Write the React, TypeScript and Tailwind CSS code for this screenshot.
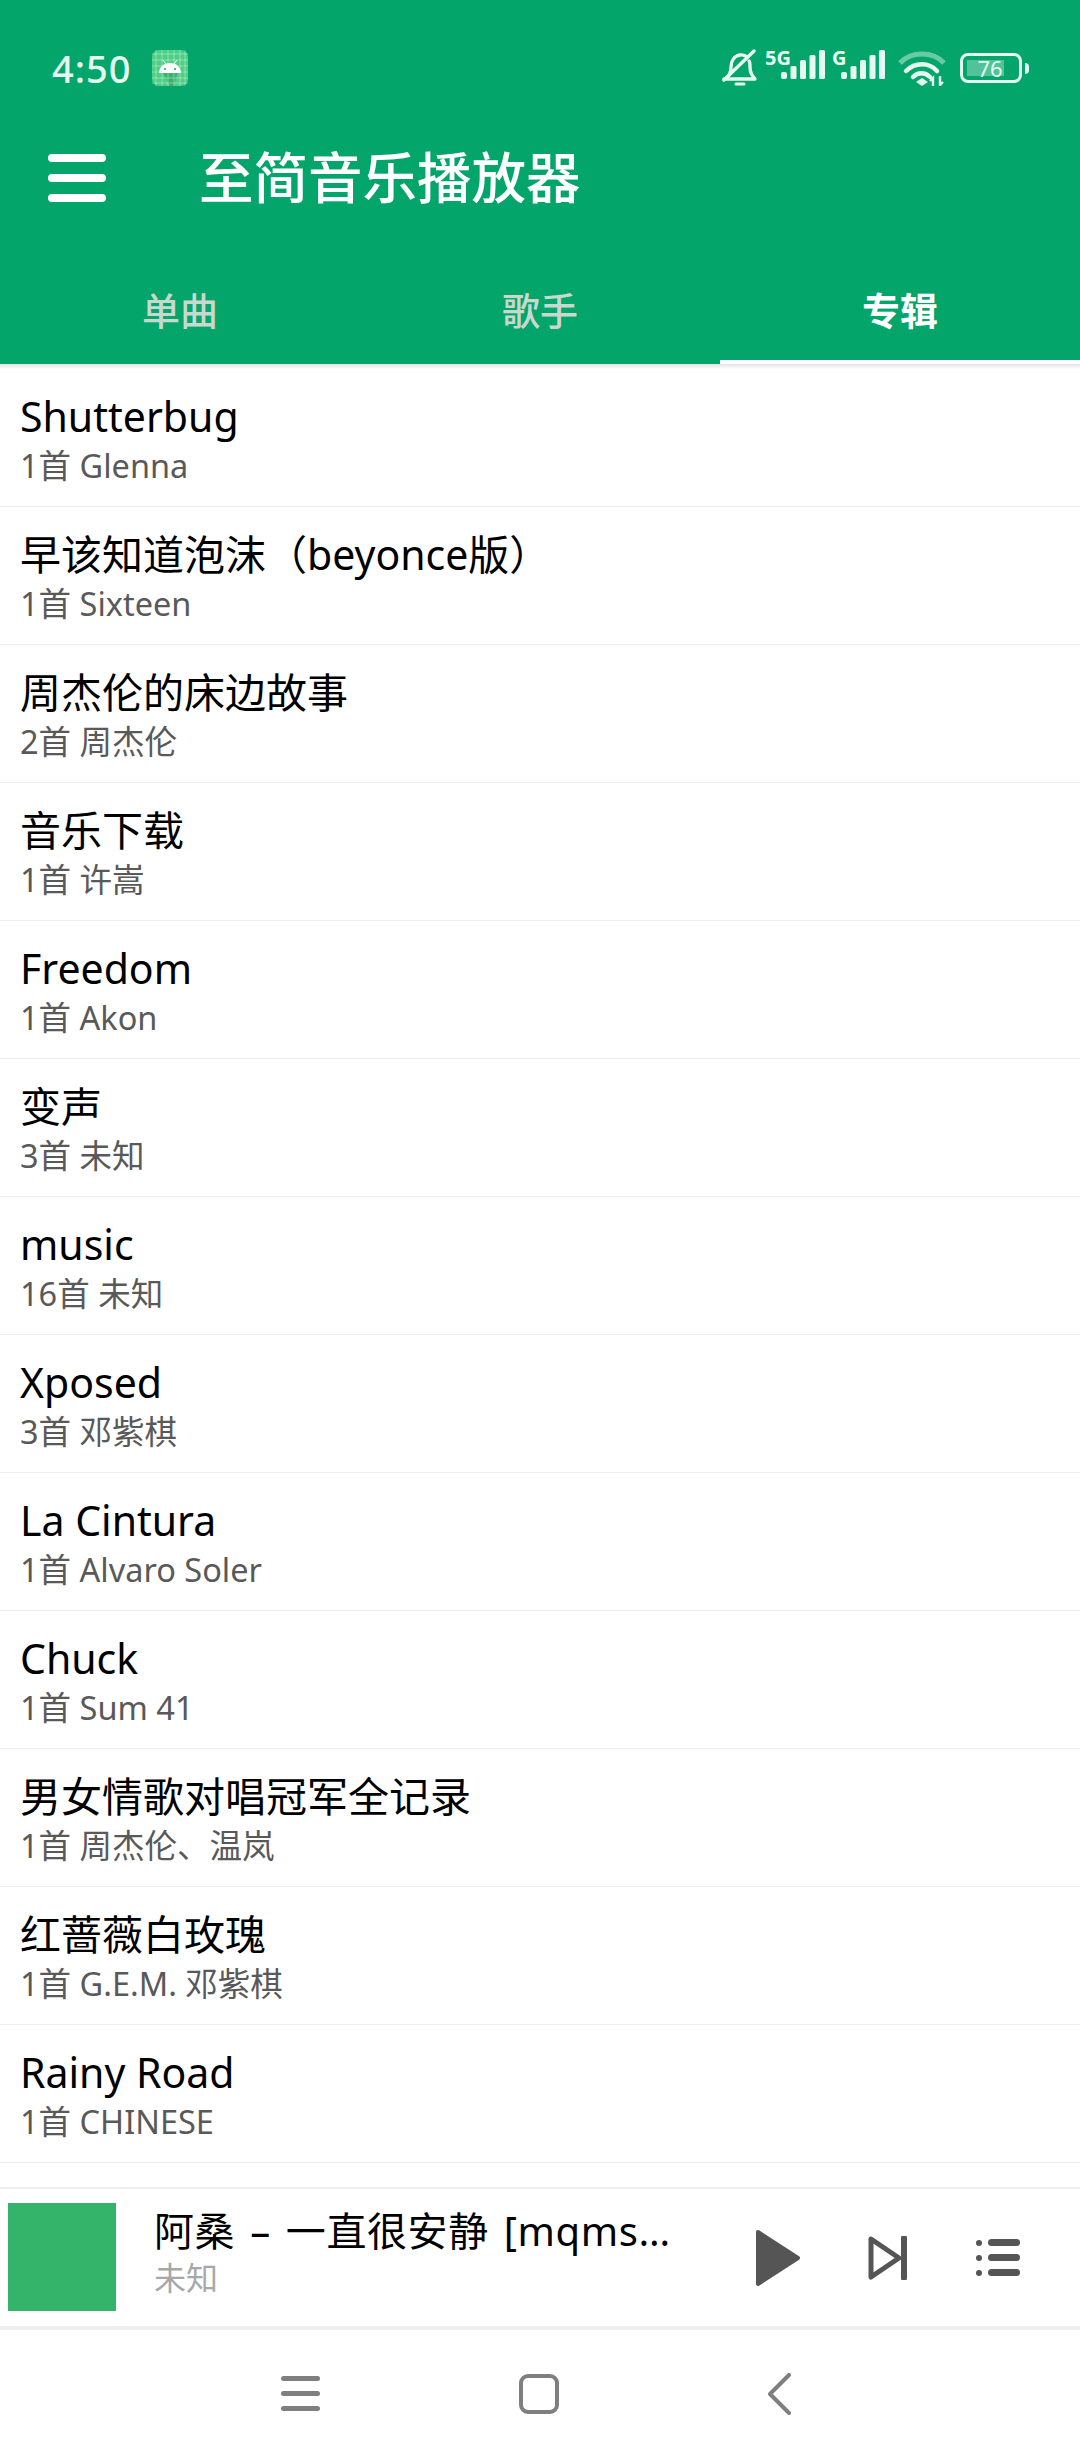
import React from 'react';

const albums = [
  { title: 'Shutterbug', sub: '1首 Glenna' },
  { title: '早该知道泡沫（beyonce版）', sub: '1首 Sixteen' },
  { title: '周杰伦的床边故事', sub: '2首 周杰伦' },
  { title: '音乐下载', sub: '1首 许嵩' },
  { title: 'Freedom', sub: '1首 Akon' },
  { title: '变声', sub: '3首 未知' },
  { title: 'music', sub: '16首 未知' },
  { title: 'Xposed', sub: '3首 邓紫棋' },
  { title: 'La Cintura', sub: '1首 Alvaro Soler' },
  { title: 'Chuck', sub: '1首 Sum 41' },
  { title: '男女情歌对唱冠军全记录', sub: '1首 周杰伦、温岚' },
  { title: '红蔷薇白玫瑰', sub: '1首 G.E.M. 邓紫棋' },
  { title: 'Rainy Road', sub: '1首 CHINESE' },
];

function AppBadge() {
  return (
    <svg width="36" height="36" viewBox="0 0 36 36" className="ml-[20px]">
      <rect width="36" height="36" rx="7" fill="#4fcf85" />
      <path d="M10 21h16l-4 15H18z" fill="#2f9c61" opacity="0.6" />
      <path
        d="M4 0v36M10 0v36M16 0v36M22 0v36M28 0v36M33 0v36M0 4h36M0 10h36M0 16h36M0 22h36M0 28h36M0 33h36"
        stroke="#ffffff"
        strokeOpacity="0.35"
        strokeWidth="1"
      />
      <path d="M7 23c0-6 5-10 11-10s11 4 11 10z" fill="#ffffff" />
      <path d="M11 10l3 4M25 10l-3 4" stroke="#ffffff" strokeWidth="1" />
      <circle cx="13" cy="19" r="1" fill="#2f9c61" />
      <circle cx="23" cy="19" r="1" fill="#2f9c61" />
    </svg>
  );
}

function Bars({ x }: { x: number }) {
  return (
    <g fill="#e6f9f0">
      <rect x={x} y="22" width="6" height="7" rx="2" />
      <rect x={x + 9.5} y="16" width="6" height="13" rx="1.5" />
      <rect x={x + 19} y="10" width="6" height="19" rx="1.5" />
      <rect x={x + 28.5} y="5" width="6" height="24" rx="1.5" />
      <rect x={x + 38} y="0" width="6" height="29" rx="1.5" />
    </g>
  );
}

function StatusIcons() {
  return (
    <div className="flex items-center">
      <svg width="38" height="38" viewBox="0 0 38 38" fill="none" stroke="#e6f9f0" strokeWidth="3.4" strokeLinecap="round" strokeLinejoin="round">
        <path d="M3 30h31c-4-4-5-7-5-12 0-3 0-5-1-6M10 18c0-6 3-11 9-12 3-.5 5 0 7 2M10 18c0 5-2 9-5 12" />
        <path d="M3 31L33 2" />
        <path d="M15 35h8" strokeWidth="3" />
      </svg>
      <svg width="60" height="38" viewBox="0 -8 60 38" className="ml-[6px] -mt-[14px]">
        <text x="0" y="15" fontSize="20" fontWeight="700" fill="#e6f9f0" fontFamily="Noto Sans, sans-serif">5G</text>
        <Bars x={16} />
      </svg>
      <svg width="54" height="38" viewBox="0 -8 54 38" className="ml-[7px] -mt-[14px]">
        <text x="0" y="15" fontSize="20" fontWeight="700" fill="#e6f9f0" fontFamily="Noto Sans, sans-serif">G</text>
        <Bars x={9} />
      </svg>
      <svg width="48" height="36" viewBox="0 0 48 36" fill="none" className="ml-[12px]">
        <path d="M2 13C13 1 35 1 46 13" stroke="#e6f9f0" strokeOpacity="0.45" strokeWidth="5" />
        <path d="M8 21c9-9 23-9 31 0" stroke="#e6f9f0" strokeWidth="4.5" strokeLinecap="round" />
        <path d="M15 27c5-5 12-5 17 0" stroke="#e6f9f0" strokeWidth="4.5" strokeLinecap="round" />
        <path d="M18 32l6-4 6 4-6 4z" fill="#e6f9f0" />
        <path d="M35 36v-8l-3 3M42 26v9l3-3" stroke="#e6f9f0" strokeWidth="2.4" />
      </svg>
      <div className="ml-[14px] flex items-center">
        <div className="relative flex h-[30px] w-[62px] items-center rounded-[8px] border-[3px] border-[#e6f9f0] p-[4px]">
          <div className="h-full w-[37px] bg-[#e6f9f0]/35" />
          <span className="absolute inset-0 flex items-center justify-center pr-[2px] text-[22px] leading-none text-[#e6f9f0]">76</span>
        </div>
        <div className="ml-[3px] h-[11px] w-[4px] rounded-r-full bg-[#e6f9f0]" />
      </div>
    </div>
  );
}

function AlbumRow({ title, sub }: { title: string; sub: string }) {
  return (
    <div className="h-[138px] shrink-0 border-b border-[#eeeeee] pl-[20px] pt-[23px]">
      <div className="text-[41px] leading-[48px] text-black">{title}</div>
      <div className="mt-[6px] text-[32.5px] leading-[40px] text-[#595959]">{sub}</div>
    </div>
  );
}

export default function App() {
  return (
    <div className="flex h-[2460px] w-[1080px] flex-col overflow-hidden bg-white font-['Noto_Sans','Noto_Sans_CJK_SC',sans-serif]">
      <header className="h-[364px] shrink-0 bg-[#03a56a]">
        <div className="flex h-[136px] items-center justify-between pl-[52px] pr-[51px]">
          <div className="flex items-center">
            <span className="text-[38px] font-medium leading-none tracking-[1px] text-[#e6f9f0]">4:50</span>
            <AppBadge />
          </div>
          <StatusIcons />
        </div>
        <div className="flex h-[84px] items-center pl-[48px]">
          <div className="flex w-[58px] flex-col gap-[12px]">
            <div className="h-[8px] rounded-full bg-white" />
            <div className="h-[8px] rounded-full bg-white" />
            <div className="h-[8px] rounded-full bg-white" />
          </div>
          <h1 className="ml-[93px] -mt-[2px] text-[54.5px] font-medium leading-none text-white">至简音乐播放器</h1>
        </div>
        <div className="flex h-[144px] text-[38px] font-medium">
          <div className="flex flex-1 items-center justify-center border-b-4 border-transparent pt-[40px] text-[#c8d8cf]">单曲</div>
          <div className="flex flex-1 items-center justify-center border-b-4 border-transparent pt-[40px] text-[#c8d8cf]">歌手</div>
          <div className="flex flex-1 items-center justify-center border-b-4 border-white pt-[40px] font-bold text-white">专辑</div>
        </div>
      </header>

      <div className="h-[5px] shrink-0 bg-gradient-to-b from-[#e2e2e2] to-white" />

      <div className="flex min-h-0 flex-1 flex-col overflow-hidden">
        {albums.map((album) => (
          <AlbumRow key={album.title} title={album.title} sub={album.sub} />
        ))}
      </div>

      <div className="flex h-[143px] shrink-0 items-center border-y-[2px] border-b-4 border-t-[#eeeeee] border-b-[#eeeeee] pl-[8px]">
        <div className="-mt-[2px] h-[108px] w-[108px] shrink-0 bg-[#34b36b]" />
        <div className="ml-[38px] -mt-[12px] w-[526px] min-w-0">
          <div className="truncate text-[40px] leading-[50px] tracking-[0.6px] [word-spacing:4px] text-black">阿桑 – 一直很安静 [mqms2]-320kbps</div>
          <div className="mt-[2px] text-[32px] leading-[40px] text-[#a8a8a8]">未知</div>
        </div>
        <svg width="46" height="58" viewBox="0 0 46 58" className="ml-[75px]">
          <path d="M3 3l40 26-40 26z" fill="#555555" stroke="#555555" strokeWidth="4" strokeLinejoin="round" />
        </svg>
        <svg width="40" height="44" viewBox="0 0 40 44" fill="none" stroke="#555555" strokeLinejoin="round" className="ml-[67px]">
          <path d="M3 3l28 19L3 41z" strokeWidth="5" />
          <path d="M36 2v40" strokeWidth="6" strokeLinecap="round" />
        </svg>
        <svg width="44" height="38" viewBox="0 0 44 38" fill="#555555" className="ml-[68px]">
          <rect x="0" y="1" width="6" height="6" rx="3" />
          <rect x="12" y="0" width="32" height="7" rx="3.5" />
          <rect x="0" y="16" width="6" height="6" rx="3" />
          <rect x="12" y="15" width="32" height="7" rx="3.5" />
          <rect x="0" y="31" width="6" height="6" rx="3" />
          <rect x="12" y="30" width="32" height="7" rx="3.5" />
        </svg>
      </div>

      <nav className="flex h-[130px] shrink-0 items-center justify-center bg-white pr-[9px] pb-[3px]">
        <div className="flex w-[39px] flex-col gap-[10px]">
          <div className="h-[5px] rounded-full bg-[#7f7f7f]" />
          <div className="h-[5px] rounded-full bg-[#7f7f7f]" />
          <div className="h-[5px] rounded-full bg-[#7f7f7f]" />
        </div>
        <div className="ml-[199px] h-[40px] w-[40px] rounded-[9px] border-[4px] border-[#7f7f7f]" />
        <svg width="24" height="42" viewBox="0 0 24 42" fill="none" stroke="#7f7f7f" strokeWidth="4" strokeLinecap="round" strokeLinejoin="round" className="ml-[208px]">
          <path d="M22 2L3 21l19 19" />
        </svg>
      </nav>
    </div>
  );
}
